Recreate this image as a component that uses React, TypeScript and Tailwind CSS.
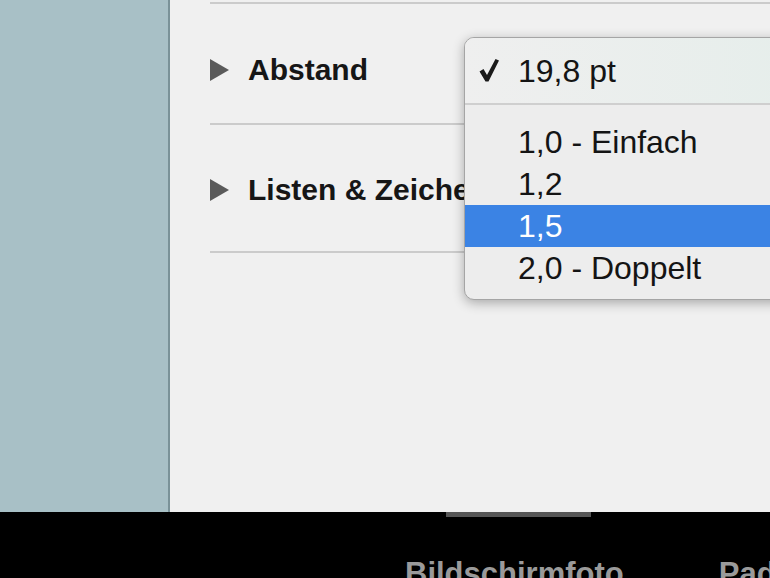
import React from 'react';

const font = { fontFamily: '"Liberation Sans", Arial, sans-serif' };

const Disclosure = () => (
  <svg width="19" height="22" viewBox="0 0 19 22" className="shrink-0">
    <path d="M0 0 L19 11 L0 22 Z" fill="#5a5a5a" />
  </svg>
);

const Check = () => (
  <svg width="20" height="23" viewBox="0 0 20 23" className="shrink-0">
    <path d="M0.5 12.5 L4.5 10 L8 16 L16.5 0 L20 1.5 L9.5 22.5 L6.5 22.5 Z" fill="#1a1a1a" />
  </svg>
);

const Section = ({ label, height, top }: { label: string; height: string; top: string }) => (
  <div className={`${height} ${top} flex flex-col`}>
    <div className="flex items-center gap-[19px]">
      <Disclosure />
      <span className="text-[30px] leading-[30px] font-bold text-[#161616] whitespace-nowrap">{label}</span>
    </div>
  </div>
);

const items = ['1,0 - Einfach', '1,2', '1,5', '2,0 - Doppelt'];

const App = () => {
  return (
    <div className="w-[770px] h-[578px] overflow-hidden flex flex-col bg-black" style={font}>
      <div className="h-[512px] shrink-0 flex">
        <div className="w-[170px] bg-[#a8c0c6] border-r-2 border-[#7a9298]" />
        <div className="relative flex-1 bg-[#f0f0f0] pl-[40px] pt-[2px]">
          <div className="h-[2px] bg-[#cbcbcb]" />
          <Section label="Abstand" height="h-[119px]" top="pt-[51px]" />
          <div className="h-[2px] bg-[#cbcbcb]" />
          <Section label="Listen & Zeichen" height="h-[126px]" top="pt-[50px]" />
          <div className="h-[2px] bg-[#cbcbcb]" />

          {/* popup menu */}
          <div className="absolute left-[294px] top-[37px] w-[330px] h-[263px] rounded-[10px] bg-[#ededed] border border-[#a5a5a5] shadow-[0_3px_12px_rgba(0,0,0,0.3)] overflow-hidden text-[32px] leading-[32px] text-[#141414]">
            <div className="h-[65px] flex items-center pl-[14px] bg-gradient-to-r from-[#efefef] to-[#e6eeeb]">
              <Check />
              <span className="ml-[19px] text-[32px]">19,8 pt</span>
            </div>
            <div className="h-[2px] bg-[#cfcfcf]" />
            <div className="pt-[16px]">
              {items.map((t) => (
                <div
                  key={t}
                  className={`h-[42px] flex items-center pl-[53px] ${t === '1,5' ? 'bg-[#3b83e4] text-white' : ''}`}
                >
                  {t}
                </div>
              ))}
            </div>
          </div>
        </div>
      </div>

      <div className="flex-1 flex flex-col">
        <div className="ml-[446px] w-[145px] h-[5px] shrink-0 bg-[#565656]" />
        <div className="mt-[41px] flex text-[31px] leading-[31px] font-bold text-[#9a9a9a] whitespace-nowrap">
          <span className="ml-[405px]">Bildschirmfoto</span>
          <span className="ml-[95px]">Pad</span>
        </div>
      </div>
    </div>
  );
};

export default App;
